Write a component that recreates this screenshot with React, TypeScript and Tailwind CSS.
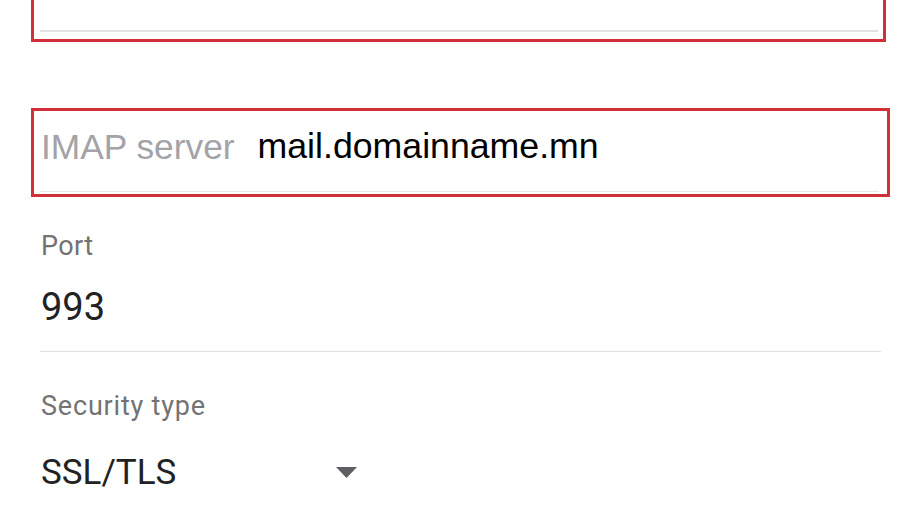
export default function App() {
  return (
    <div className="w-[920px] h-[518px] overflow-hidden bg-white font-['Roboto',sans-serif]">
      {/* Password box, mostly off the top edge */}
      <div className="ml-[31px] w-[855px] h-[42px] border-x-[3px] border-b-[3px] border-[#d22f3a] overflow-hidden flex flex-col">
        <div className="mt-[-32px] pl-[7px] h-[35px] leading-[35px] text-[35px] text-[#8a8a8a] font-['Liberation_Sans',Arial,sans-serif]">
          Password
        </div>
        <div className="mt-auto mb-[7px] ml-[6px] mr-[5px] h-[2px] bg-[#e3e3e3]" />
      </div>

      {/* IMAP server box */}
      <div className="mt-[66px] ml-[31px] w-[859px] h-[89px] border-[3px] border-[#d22f3a] flex flex-col">
        <div className="mt-[18px] pl-[7px] flex items-center gap-[23px] font-['Liberation_Sans',Arial,sans-serif] leading-[35px]">
          <span className="text-[35.3px] text-[#a3a3a7]">IMAP server</span>
          <span className="text-[35.7px] text-black">mail.domainname.mn</span>
        </div>
        <div className="mt-auto mb-[2px] ml-[6px] mr-[8px] h-px bg-[#e8e8e8]" />
      </div>

      <div className="ml-[41px] w-[840px]">
        {/* Port */}
        <div className="mt-[36px] h-[27px] leading-[27px] text-[27px] tracking-[0.4px] text-[#737373]">Port</div>
        <div className="mt-[29px] h-[37px] leading-[37px] text-[38px] text-[#222222]">993</div>
        <div className="mt-[25px] ml-[-1px] h-px bg-[#e0e0e0]" />

        {/* Security type */}
        <div className="mt-[41px] h-[27px] leading-[27px] text-[27px] tracking-[0.8px] text-[#737373]">Security type</div>
        <div className="mt-[34px] w-[316px] h-[37px] flex items-center justify-between">
          <span className="leading-[37px] text-[35px] text-[#222222]">SSL/TLS</span>
          <svg width="21" height="11" viewBox="0 0 21 11">
            <path d="M0 0 L21 0 L10.5 11 Z" fill="#5f5f63" />
          </svg>
        </div>
      </div>
    </div>
  );
}
